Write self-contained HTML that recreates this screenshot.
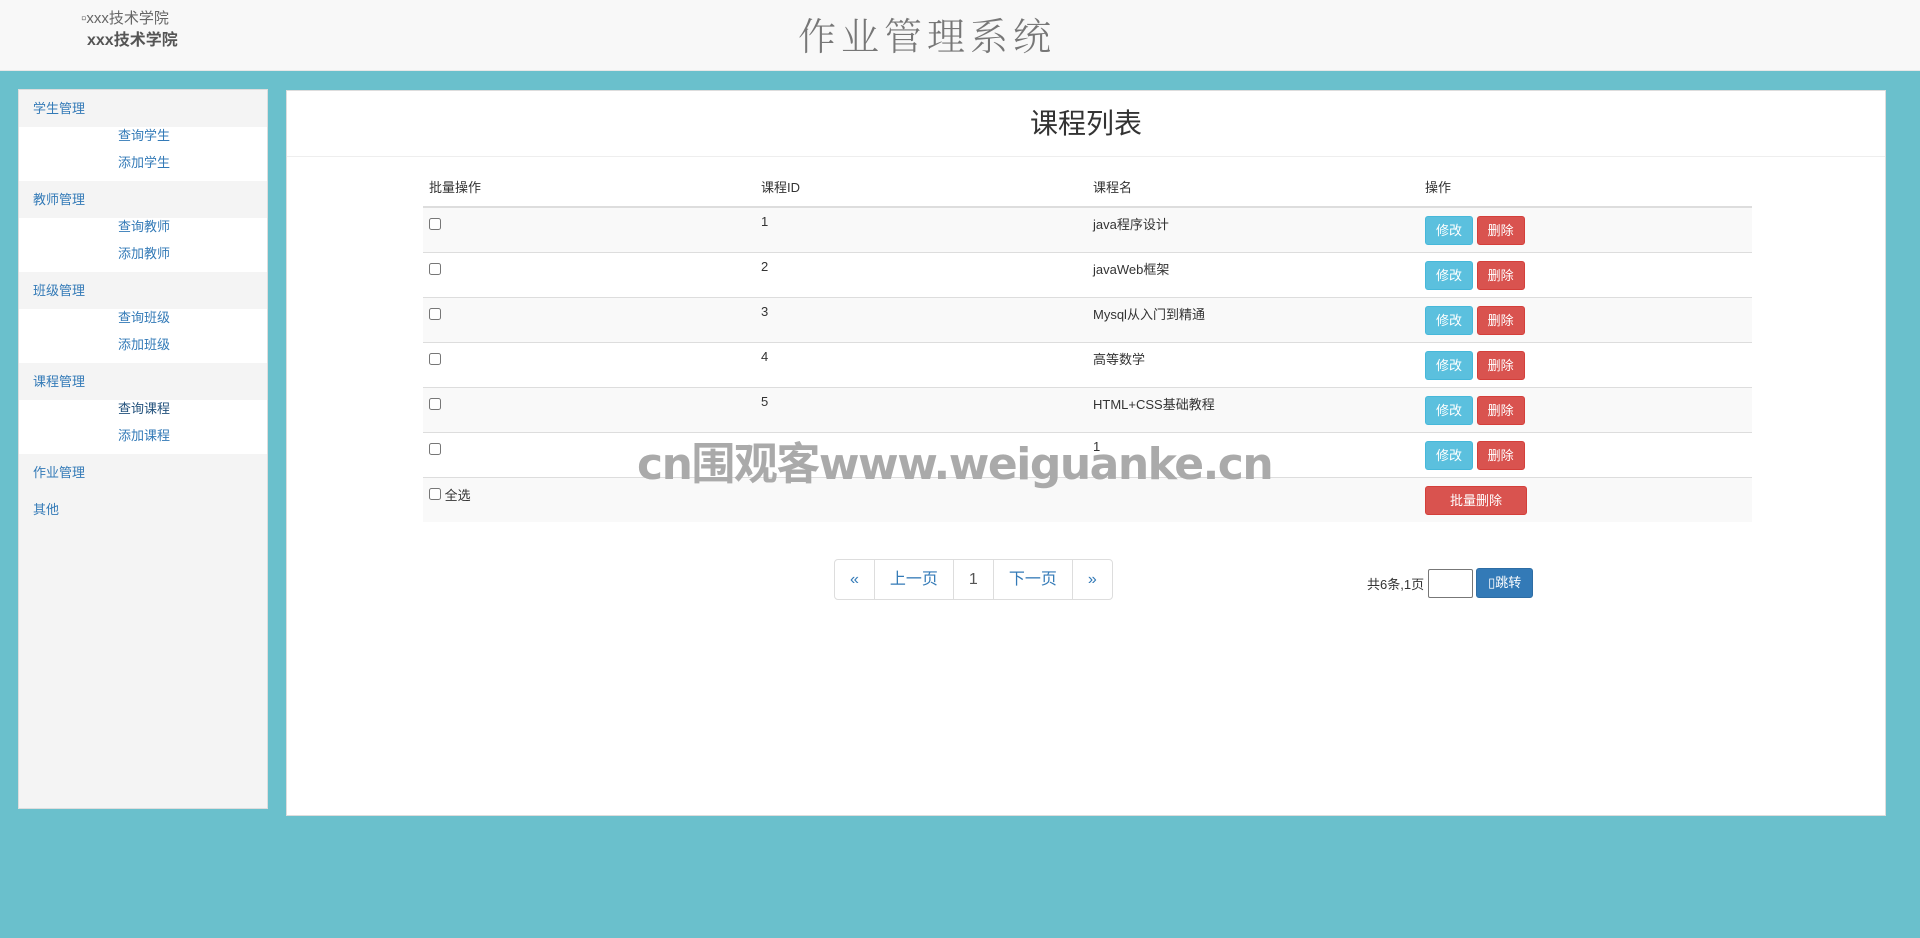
<!DOCTYPE html>
<html><head><meta charset="utf-8"><style>
*{margin:0;padding:0;box-sizing:border-box}
body{width:1920px;height:938px;background:#6ac0cc;font-family:"Liberation Sans","Noto Sans CJK SC",sans-serif;font-size:13px;color:#333;position:relative;overflow:hidden}
.hdr{position:absolute;left:0;top:0;width:1920px;height:71px;background:#f8f8f8;border-bottom:1px solid #e7e7e7}
.logo1{position:absolute;left:81px;top:7px;color:#666;font-size:15px}
.logo2{position:absolute;left:87px;top:26px;color:#555;font-size:16px;font-weight:bold}
.title{position:absolute;left:798px;top:6px;font-family:"Noto Serif CJK SC",serif;font-size:38px;color:#777;letter-spacing:5px;font-weight:300}
.side{position:absolute;left:18px;top:89px;width:250px;height:720px;background:#f4f4f4;border:1px solid #ddd}
.gh{height:37px;line-height:37px;padding-left:14px;color:#337ab7}
.items{background:#fff;height:54px;padding-top:0}
.items div{height:27px;line-height:17px;padding-left:99px;color:#337ab7}
.main{position:absolute;left:286px;top:90px;width:1600px;height:726px;background:#fff;border:1px solid #ddd}
.mt{height:66px;border-bottom:1px solid #eee;text-align:center;font-size:28px;line-height:66px;color:#333}
table{position:absolute;left:136px;top:76px;width:1329px;border-collapse:collapse}
th{font-weight:normal;text-align:left;height:40px;padding:0 6px;vertical-align:middle;border-bottom:2px solid #ddd}
td{height:45px;padding:6px 6px;vertical-align:top;border-top:1px solid #ddd}
tr.o td{background:#f9f9f9}
input[type=checkbox]{width:12px;height:12px;margin-top:4px}
.b{display:inline-block;height:29px;line-height:27px;padding:0 10px;color:#fff;border-radius:3px;font-size:13px;margin-top:2px}
.bi{background:#5bc0de;border:1px solid #46b8da}
.bd{background:#d9534f;border:1px solid #d43f3a}
.pg{position:absolute;left:547px;top:468px;height:41px;display:flex;border:1px solid #ddd;border-radius:4px}
.pg div{padding:0 15px;line-height:39px;color:#337ab7;font-size:16px;border-left:1px solid #ddd}
.pg div:first-child{border-left:none}
.jm{position:absolute;left:1080px;top:477px;display:flex;align-items:center}
.inp{width:45px;height:29px;border:1px solid #777;border-radius:2px;margin:0 3px 0 4px}
.jb{background:#337ab7;border:1px solid #2e6da4;color:#fff;height:30px;line-height:28px;padding:0 11px;border-radius:3px}
.wm{position:absolute;left:637px;top:428px;font-size:44px;font-weight:bold;color:#aaa;letter-spacing:-1.5px;font-family:"DejaVu Sans","Noto Sans CJK SC",sans-serif}
</style></head><body>
<div class="hdr"><div class="logo1">▫xxx技术学院</div><div class="logo2">xxx技术学院</div><div class="title">作业管理系统</div></div>
<div class="side">
<div class="gh">学生管理</div><div class="items"><div>查询学生</div><div>添加学生</div></div>
<div class="gh">教师管理</div><div class="items"><div>查询教师</div><div>添加教师</div></div>
<div class="gh">班级管理</div><div class="items"><div>查询班级</div><div>添加班级</div></div>
<div class="gh">课程管理</div><div class="items"><div style="color:#23527c">查询课程</div><div>添加课程</div></div>
<div class="gh">作业管理</div><div class="gh">其他</div>
</div>
<div class="main">
<div class="mt">课程列表</div>
<table>
<tr><th style="width:332px">批量操作</th><th style="width:332px">课程ID</th><th style="width:332px">课程名</th><th>操作</th></tr>
<tr class="o"><td><input type="checkbox"></td><td>1</td><td>java程序设计</td><td><span class="b bi">修改</span> <span class="b bd">删除</span></td></tr>
<tr><td><input type="checkbox"></td><td>2</td><td>javaWeb框架</td><td><span class="b bi">修改</span> <span class="b bd">删除</span></td></tr>
<tr class="o"><td><input type="checkbox"></td><td>3</td><td>Mysql从入门到精通</td><td><span class="b bi">修改</span> <span class="b bd">删除</span></td></tr>
<tr><td><input type="checkbox"></td><td>4</td><td>高等数学</td><td><span class="b bi">修改</span> <span class="b bd">删除</span></td></tr>
<tr class="o"><td><input type="checkbox"></td><td>5</td><td>HTML+CSS基础教程</td><td><span class="b bi">修改</span> <span class="b bd">删除</span></td></tr>
<tr><td><input type="checkbox"></td><td></td><td>1</td><td><span class="b bi">修改</span> <span class="b bd">删除</span></td></tr>
<tr class="o"><td><input type="checkbox"> 全选</td><td></td><td></td><td><span class="b bd" style="padding:0 24px">批量删除</span></td></tr>
</table>
<div class="pg"><div>«</div><div>上一页</div><div style="color:#555">1</div><div>下一页</div><div>»</div></div>
<div class="jm">共6条,1页<span class="inp"></span><span class="jb">▯跳转</span></div>
</div>
<div class="wm">cn围观客www.weiguanke.cn</div>
</body></html>
